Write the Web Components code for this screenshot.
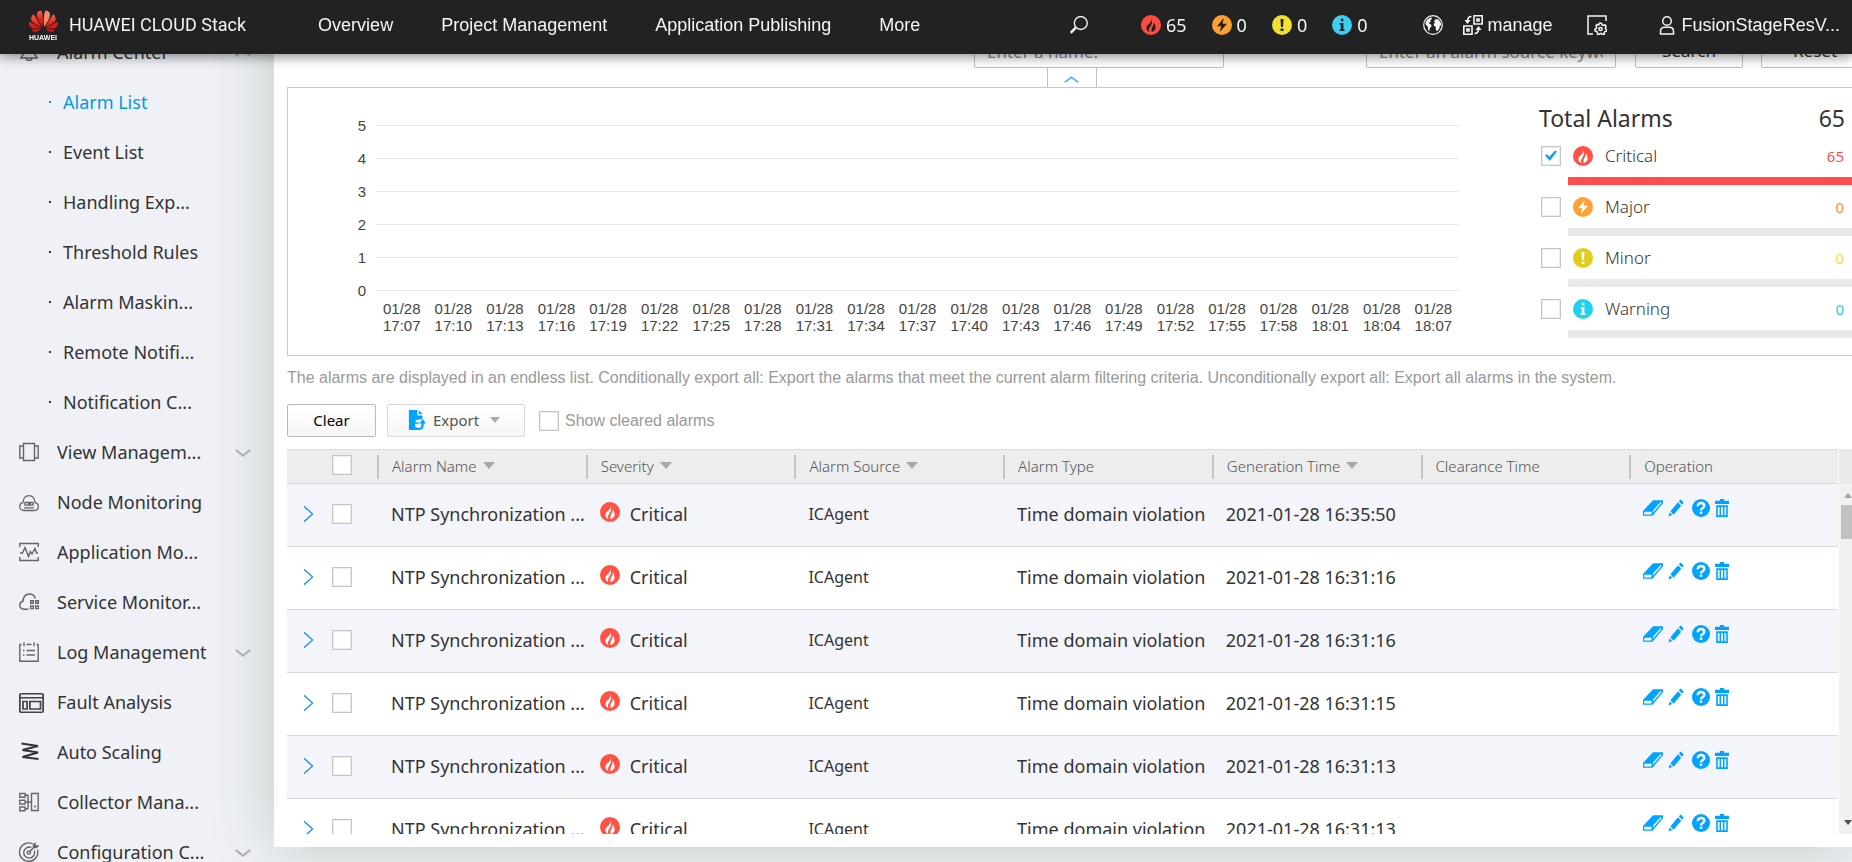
<!DOCTYPE html>
<html lang="en">
<head>
<meta charset="utf-8">
<title>HUAWEI CLOUD Stack - Alarm List</title>
<style>
  html, body { margin: 0; height: 100%; }
  body {
    font-family: "Noto Sans", "Open Sans", sans-serif;
    font-size: 18px;
    color: #333;
    background: #eff1f6;
    overflow: hidden;
  }
</style>
</head>
<body>
<alarm-app></alarm-app>

<script>
const GLYPHS = {
  fire: '<circle cx="10" cy="10" r="10" fill="currentColor"/><path fill="var(--glyph,#fff)" d="M10.200 2.800c.9 2.400-.2 4-1.500 5.500C7.200 9.800 5.200 11 5.400 13.300c.2 1.900 1.600 3.200 3.200 3.700-1.200-2-.5-3.700.5-5.100.9-1.300 1.900-2.700 1.900-4.700 0-1.700-.2-3.100-.8-4.400z"/><path fill="var(--glyph,#fff)" d="M12.600 6.800c.4 1.900-.1 3.400-1 4.700-1 1.400-1.400 3-1 5.400 2.200-.4 3.800-1.900 4-3.900.2-2.200-1-4.300-2-6.200z"/>',
  bolt: '<circle cx="10" cy="10" r="10" fill="currentColor"/><path fill="var(--glyph,#fff)" d="M11.800 3 5 11.200h4.200L7.800 17 15 8.800h-4.400z"/>',
  bang: '<circle cx="10" cy="10" r="10" fill="currentColor"/><path fill="var(--glyph,#fff)" d="M8.500 4h3l-.5 8H9zM8.600 13.500h2.800V16H8.600z"/>',
  info: '<circle cx="10" cy="10" r="10" fill="currentColor"/><path fill="var(--glyph,#fff)" d="M8.800 3.800h2.600v2.400H8.800zM7.600 8h3.800v6.600h1.200V16H7.600v-1.400h1.200V9.400H7.600z"/>',
  search: '<g fill="none" stroke="currentColor"><circle cx="12" cy="7.800" r="7.200" stroke-width="1.500"/><path d="M6.500 13 .8 18.700" stroke-width="2.800"/></g>',
  globe: '<circle cx="10" cy="10" r="9.300" fill="none" stroke="currentColor" stroke-width="1.200"/><path fill="currentColor" d="M3 6.500C4.200 4 6.200 2.800 8.500 2.500l.5 1.300-1.700 1.500.4 1.400-2.200 1.300 2.500 1.500.6 1.700-1.700 1.700-.6 3.300-1.200-1.400-.3-3.300L3.500 10.500 2.400 8.700zM11 6.500l1.700-2.500 3 .5 2.200 3.500.3 3-1.300-.8-.4 3-2.300 3-1.300-1-.2-3.500-1.700-.7-.3-2.300 1.500-1z"/>',
  manage: '<g fill="none" stroke="currentColor" stroke-width="1.600"><path d="M11 .8h8.200V9H11zM.8 11H9v8.200H.8z"/><path d="M14 4h2v2h-2zM4 14h2v2H4zM8.500 1.500C6 1.500 4.500 2.800 4.500 6M11.500 18.500c2.500 0 4-1.300 4-4.500"/></g><path fill="currentColor" d="M1.500 5h6l-3 4zM12.500 15h6l-3-4z"/>',
  config: '<g fill="none" stroke="currentColor" stroke-width="1.500"><path d="M19 6V1H1v18h5"/><circle cx="13.500" cy="14" r="1.600"/><path d="m12.500 8.300 2 0 .5 1.600 1.300.6 1.500-.8 1.300 1.500-.8 1.400.3 1.200 1.100.7-.3 1.800-1.600.3-.7 1.100.2 1.600-1.700.5-1.100-1.300h-1.300L12 19.800l-1.700-.7.2-1.600-.8-1.100-1.600-.4-.2-1.800 1.400-.8.400-1.200-.7-1.500 1.300-1.300 1.400.7z"/></g>',
  user: '<g fill="none" stroke="currentColor" stroke-width="1.500"><circle cx="10" cy="6" r="4.300"/><path d="M3.500 19v-2.500c0-2.800 1.500-4.300 4-4.300h5c2.500 0 4 1.500 4 4.300V19z"/></g>',
  bell: '<path fill="none" stroke="currentColor" stroke-width="1.400" d="M10 1.500c-4 0-5.500 3-5.500 6v4.500L1.800 16h16.400l-2.700-4V7.500c0-3-1.500-6-5.500-6zM7 16.500c.5 2.500 5.500 2.500 6 0"/>',
  view: '<path fill="none" stroke="currentColor" stroke-width="1.400" d="M4.500 1.500h11v17h-11zM4.500 4H.8v12h3.700M15.500 4h3.700v12h-3.700"/>',
  node: '<g fill="none" stroke="currentColor" stroke-width="1.300"><path d="M5 18.500c-2.500 0-4.300-1.700-4.300-4 0-2 1.300-3.400 3.300-3.800C4.300 6.500 6.500 3.700 10 3.700s5.700 2.800 6 7c2 .4 3.300 1.800 3.300 3.800 0 2.300-1.800 4-4.300 4z"/><path d="M6 10.500h8v2.700H6zM5 15.800h10M9 11.900h3"/></g>',
  wave: '<path fill="none" stroke="currentColor" stroke-width="1.400" d="M.8 5V1.500h18.400V5M.8 15v3.500h18.400V15M1 11h2.500L6 5.500l3.500 9 1.800-5 1.700 2.500L16 6.500l1.500 4.500H19"/>',
  service: '<g fill="none" stroke="currentColor" stroke-width="1.400"><path d="M9.500 17.300H5C2.500 17 .8 15.500.8 13c0-2 1.200-3.400 3.200-3.800C4.300 4.500 7 2 10.500 2c3 0 5 1.600 6 4.500"/><path d="M11.700 8.700h2.600v2.600h-2.600zM16.700 8.700h2.600v2.600h-2.600zM11.700 14h2.600v2.600h-2.600zM16.700 14h2.600v2.600h-2.600z"/></g>',
  log: '<path fill="none" stroke="currentColor" stroke-width="1.400" d="M2.500 2.500H.8v16.700h18.400V2.500h-1.700M7.500 2.500h5M5 .3v4M15 .3v4M4 8.500h1.500M7.500 8.500H16M4 13h1.500M7.500 13H16"/>',
  fault: '<g fill="none" stroke="currentColor" stroke-width="1.400"><rect x=".7" y="1.700" width="18.600" height="17.600" rx="1"/><path d="M.8 5.500h18.400M3.200 9h3.300v7.200H3.200zM8.700 9h8.500v7.200H8.700z"/></g>',
  scale: '<path fill="none" stroke="#333" stroke-width="2" d="M2.500 1.500 19 4 3.500 8 19 10.500 3.500 15l16 2"/>',
  collect: '<path fill="none" stroke="currentColor" stroke-width="1.400" d="M.8 1.500H6v3.700H.8zM.8 8.200H6V12H.8zM.8 15H6v3.700H.8zM6 3.300h3v13.500H6M6 10h7M12.500 1.500h6.700v17h-6.700zM15 14.500h2"/>',
  target: '<g fill="none" stroke="currentColor" stroke-width="1.400"><path d="M14 2A9.200 9.200 0 1 0 18.500 7.500"/><path d="M12.300 5.500a5.500 5.500 0 1 0 3 3"/><circle cx="9.800" cy="10.500" r="1.600"/><path d="m10.500 9.700 5.500-5.500V1.500L14.500 3v2.500H17l2-1.500h-2.500"/></g>',
  down: '<path fill="none" stroke="currentColor" stroke-width="2.800" d="m1 6 9 9 9-9"/>',
  up: '<path fill="none" stroke="currentColor" stroke-width="2.800" d="m1 15 9-9 9 9"/>',
  right: '<path fill="none" stroke="currentColor" stroke-width="1.700" d="m3 1.500 12 8.500-12 8.500"/>',
  export: '<path fill="currentColor" d="M1 0h9.500v5.500H16V9l-3 .5-4.500.5v2.500l3.500-.3v1.600H8V17l4 1v2H1z"/><path fill="currentColor" d="M12 0v4.200h4zM11 20v-2c3.300 0 4-1 4-4.500h-2.500l4-4.500 3.500 4.500h-2.500c0 5-1.700 6.500-6.500 6.500z"/>',
  eraser: '<path fill="currentColor" d="M10 1.500h10v3.300L9.500 18.500H0v-5.300zM1.300 14.200v3h7l.5-3zM17.700 3.300 10 12.700v2.500l8.500-10.700z" fill-rule="evenodd"/>',
  pencil: '<path fill="currentColor" d="M16 .5 19.500 4l-2 2.500-4-4zM12.500 3.500l4 4L7 17.500l-4-3.800zM2.300 14.800l3 3-4.800 1.700z"/>',
  help: '<circle cx="10" cy="10" r="10" fill="currentColor"/><path fill="none" stroke="#fff" stroke-width="2.600" d="M6.300 8c0-2.400 1.600-3.600 3.700-3.600s3.700 1.200 3.700 3.300c0 2.300-3.700 2.400-3.700 5"/><path fill="#fff" d="M8.600 14h2.800v2.500H8.600z"/>',
  trash: '<path fill="currentColor" fill-rule="evenodd" d="M7 0h6v2h7v3.500H0V2h7zM1.700 7h16.600v13H1.700zM4 9v9h2.500V9zM8.700 9v9h2.600V9zM13.500 9v9H16V9z"/>'
};

function define(name, html, ready) {
  const template = document.createElement('template');
  template.innerHTML = html;
  customElements.define(name, class extends HTMLElement {
    connectedCallback() {
      if (this.shadowRoot) return;
      this.attachShadow({ mode: 'open' }).append(template.content.cloneNode(true));
      if (ready) ready(this, this.shadowRoot);
    }
  });
}

/* Glyph from the icon set, sized by --w and --h */
define('ui-icon', `
  <style>
    :host { display: inline-flex; flex: none; width: var(--w, 20px); height: var(--h, 20px); }
    svg { width: 100%; height: 100%; display: block; }
  </style>
  <svg viewBox="0 0 20 20" preserveAspectRatio="none" aria-hidden="true"></svg>`,
  (host, root) => { root.querySelector('svg').innerHTML = GLYPHS[host.getAttribute('name')]; });

define('ui-check', `
  <style>
    :host { display: inline-flex; }
    label { display: flex; align-items: center; gap: var(--gap, 6px); }
    input {
      appearance: none; box-sizing: border-box; flex: none; display: grid; place-items: center;
      width: 20px; height: 20px; margin: 0; background: #fff;
      border: 1px solid #c6c6c6; box-shadow: inset 0 0 0 1px #ededed;
    }
    input:checked::before {
      content: ""; width: 12px; height: 11px; background: #1a9fe0;
      clip-path: polygon(0 50%, 18% 38%, 36% 62%, 84% 4%, 100% 14%, 40% 100%);
    }
  </style>
  <label><input type="checkbox"><slot></slot></label>`,
  (host, root) => {
    const input = root.querySelector('input');
    input.checked = host.hasAttribute('checked');
    if (host.hasAttribute('name')) input.setAttribute('aria-label', host.getAttribute('name'));
  });

define('brand-logo', `
  <style>
    :host { display: flex; align-items: center; }
    a { display: flex; align-items: center; gap: 10px; color: #f2f2f2; text-decoration: none; font: 18px/24px Roboto, sans-serif; }
    svg { width: 31px; height: 31px; }
  </style>
  <a href="#home">
    <svg viewBox="0 0 31 31" aria-hidden="true">
      <defs><linearGradient id="g" x1="0" y1="0" x2="0" y2="1"><stop offset="0" stop-color="#f0604c"/><stop offset=".5" stop-color="#e0261c"/><stop offset="1" stop-color="#c9100f"/></linearGradient></defs>
      <g transform="translate(1 -3) scale(1.200)" fill="url(#g)">
        <path d="M3.670 6.140S1.820 7.910 1.720 9.780v.35c.08 1.510 1.220 2.400 1.220 2.400 1.830 1.790 6.260 4.040 7.300 4.550 0 0 .06.03.1-.01l.02-.04v-.04C7.520 10.800 3.670 6.140 3.670 6.140zM9.650 18.600c-.02-.08-.1-.08-.1-.08l-7.380.26c.8 1.430 2.150 2.530 3.560 2.200.96-.25 3.160-1.780 3.880-2.300.06-.05.04-.09.04-.09zm.08-.78C6.490 15.630.21 12.280.21 12.280c-.15.46-.2.9-.21 1.300v.07c0 1.070.4 1.820.4 1.820.8 1.690 2.340 2.200 2.340 2.200.7.3 1.400.31 1.400.31.12.02 4.400 0 5.540 0 .05 0 .08-.05.08-.05v-.06c0-.03-.03-.05-.03-.05z"/>
        <path d="M9.060 3.190a3.420 3.420 0 0 0-2.570 3.150v.41c.03.6.16 1.050.16 1.050.66 2.900 3.860 7.650 4.550 8.650.05.05.1.03.1.03a.1.1 0 0 0 .06-.1c1.060-10.600-1.110-13.420-1.110-13.420-.32.02-1.190.23-1.190.23z"/>
        <path fill="#f08a6a" d="M17.360 5.460s-.49-1.800-2.440-2.280c0 0-.57-.14-1.170-.22 0 0-2.180 2.810-1.120 13.430.01.07.06.08.06.08.07.03.1-.03.1-.03.72-1.030 3.900-5.760 4.550-8.640 0 0 .36-1.400.02-2.340z"/>
        <path d="M14.440 18.530s-.07 0-.09.05c0 0-.01.07.03.1.7.51 2.850 2 3.880 2.300 0 0 .16.05.43.06h.14c.69-.02 1.900-.37 3-2.260l-7.400-.25zm7.830-8.410c.14-2.060-1.940-3.970-1.940-3.980 0 0-3.850 4.660-6.670 10.800 0 0-.03.08.02.13l.04.01h.06c1.060-.53 5.460-2.770 7.280-4.540 0 0 1.150-.93 1.210-2.420zm1.520 2.140s-6.280 3.370-9.520 5.550c0 0-.05.04-.03.11 0 0 .03.06.07.06 1.160 0 5.560 0 5.670-.02 0 0 .57-.02 1.270-.29 0 0 1.560-.5 2.370-2.270 0 0 .73-1.450.17-3.140z"/>
      </g>
      <text x="1" y="30" font-family="Liberation Sans, sans-serif" font-weight="700" font-size="7" fill="#fff">HUAWEI</text>
    </svg>
    HUAWEI CLOUD Stack
  </a>`);

define('top-bar', `
  <style>
    :host {
      position: fixed; inset: 0 0 auto 0; z-index: 10; height: 54px; box-sizing: border-box;
      display: flex; align-items: center; padding: 0 12px 4px 28px;
      background: #222; color: #f5f5f5; --glyph: #222;
      box-shadow: 0 2px 12px rgba(0, 0, 0, .5);
      font: 18px/24px "Liberation Sans", Arial, sans-serif;
    }
    a { color: inherit; text-decoration: none; white-space: nowrap; }
    nav { display: flex; gap: 48px; margin-left: 72px; }
    .tools { display: flex; align-items: center; margin-left: auto; }
    button { display: flex; padding: 0; border: 0; background: none; color: inherit; }
    .counts { display: flex; gap: 25px; margin: 0 55px 0 53px; }
    .counts a { display: flex; align-items: center; gap: 5px; font-family: "Noto Sans", sans-serif; }
    .group { display: flex; align-items: center; gap: 5px; }
    .manage { margin: 0 34px 0 20px; }
    .user { margin-left: 50px; }
  </style>
  <brand-logo></brand-logo>
  <nav><a href="#overview">Overview</a><a href="#projects">Project Management</a><a href="#publish">Application Publishing</a><a href="#more">More</a></nav>
  <div class="tools">
    <button aria-label="Search" style="--w:18px;--h:18px"><ui-icon name="search"></ui-icon></button>
    <div class="counts">
      <a href="#critical"><ui-icon name="fire" style="color:#ff4c43"></ui-icon>65</a>
      <a href="#major"><ui-icon name="bolt" style="color:#ffa033"></ui-icon>0</a>
      <a href="#minor"><ui-icon name="bang" style="color:#f0e130"></ui-icon>0</a>
      <a href="#warning"><ui-icon name="info" style="color:#3fcdf0"></ui-icon>0</a>
    </div>
    <button aria-label="Language"><ui-icon name="globe"></ui-icon></button>
    <a class="group manage" href="#manage"><ui-icon name="manage"></ui-icon>manage</a>
    <button aria-label="Settings"><ui-icon name="config"></ui-icon></button>
    <a class="group user" href="#user"><ui-icon name="user"></ui-icon>FusionStageResV...</a>
  </div>`);

define('nav-item', `
  <style>
    :host { display: block; }
    a { display: flex; align-items: center; height: 50px; padding: 0 23px 0 19px; gap: 18px; color: #333; text-decoration: none; white-space: nowrap; }
    span { flex: 1; }
    ui-icon { color: #666; }
    [name=fault] { --w: 25px; --h: 21px; margin-right: -5px; color: #444; }
    .arrow { color: #aaa; --w: 16px; --h: 13px; }
    :host([sub]) a { padding-left: 49px; gap: 12px; }
    i { width: 2px; height: 2px; background: currentColor; }
    :host([active]) a { color: #0099e6; }
  </style>
  <a href="#"><span><slot></slot></span></a>`,
  (host, root) => {
    const link = root.querySelector('a');
    const lead = document.createElement(host.hasAttribute('sub') ? 'i' : 'ui-icon');
    if (host.hasAttribute('icon')) lead.setAttribute('name', host.getAttribute('icon'));
    link.prepend(lead);
    if (host.hasAttribute('arrow')) {
      const arrow = document.createElement('ui-icon');
      arrow.className = 'arrow';
      arrow.setAttribute('name', host.getAttribute('arrow'));
      link.append(arrow);
    }
  });

define('side-nav', `
  <style>
    :host { display: block; flex: none; width: 274px; padding-top: 27px; box-sizing: border-box; }
    nav { display: block; }
  </style>
  <nav aria-label="Monitoring">
    <nav-item icon="bell" arrow="up">Alarm Center</nav-item>
    <nav-item sub active>Alarm List</nav-item>
    <nav-item sub>Event List</nav-item>
    <nav-item sub>Handling Exp...</nav-item>
    <nav-item sub>Threshold Rules</nav-item>
    <nav-item sub>Alarm Maskin...</nav-item>
    <nav-item sub>Remote Notifi...</nav-item>
    <nav-item sub>Notification C...</nav-item>
    <nav-item icon="view" arrow="down">View Managem...</nav-item>
    <nav-item icon="node">Node Monitoring</nav-item>
    <nav-item icon="wave">Application Mo...</nav-item>
    <nav-item icon="service">Service Monitor...</nav-item>
    <nav-item icon="log" arrow="down">Log Management</nav-item>
    <nav-item icon="fault">Fault Analysis</nav-item>
    <nav-item icon="scale">Auto Scaling</nav-item>
    <nav-item icon="collect">Collector Mana...</nav-item>
    <nav-item icon="target" arrow="down">Configuration C...</nav-item>
  </nav>`);

define('filter-bar', `
  <style>
    :host { display: block; }
    form { display: flex; justify-content: flex-end; margin-right: -13px; }
    input, button {
      box-sizing: border-box; height: 34px; border: 1px solid #c0c0c0; border-radius: 2px;
      background: #fff; font: 17px/20px "Noto Sans", sans-serif; color: #333;
    }
    input { width: 250px; padding: 0 12px; }
    input::placeholder { color: #888; }
    input + input { margin: 0 19px 0 142px; }
    form button { width: 108px; }
    form button + button { margin-left: 18px; }
    .fold { display: flex; align-items: center; justify-content: center; width: 50px; height: 19px; margin: 0 auto; padding: 3px 0 0; border-width: 0 1px; border-radius: 0; color: #5aaef5; --w: 15px; --h: 11px; }
  </style>
  <form onsubmit="return false">
    <input aria-label="Name" placeholder="Enter a name.">
    <input aria-label="Alarm source" placeholder="Enter an alarm source keyword.">
    <button>Search</button><button type="reset">Reset</button>
  </form>
  <button class="fold" aria-label="Collapse filters"><ui-icon name="up"></ui-icon></button>`);

define('trend-chart', `
  <style>
    :host { display: block; font: 15px/17px "Liberation Sans", Arial, sans-serif; color: #444; }
    .row { display: flex; align-items: center; gap: 10px; height: 33px; }
    .row span { width: 20px; text-align: right; }
    .row i { flex: 1; height: 1px; background: #e8e8e8; }
    .times { display: flex; margin: -7px 0 0 30px; }
    .times span { flex: 1; text-align: center; }
  </style>
  <div class="rows"></div><div class="times"></div>`,
  (host, root) => {
    root.querySelector('.rows').innerHTML = [5, 4, 3, 2, 1, 0].map(n => `<div class="row"><span>${n}</span><i></i></div>`).join('');
    let out = '';
    for (let m = 7; m <= 67; m += 3) {
      const time = (17 + Math.floor(m / 60)) + ':' + String(m % 60).padStart(2, '0');
      out += `<span>01/28<br>${time}</span>`;
    }
    root.querySelector('.times').innerHTML = out;
  });

define('severity-row', `
  <style>
    :host { display: block; font-weight: 300; font-size: 17px; line-height: 22px; }
    .line { display: flex; align-items: center; justify-content: space-between; height: 43px; padding: 0 11px 0 2px; }
    ui-check { --gap: 12px; }
    ui-icon { color: var(--icon); }
    .name { display: flex; align-items: center; gap: 12px; }
    .value { font-size: 15px; color: var(--value); font-weight: 400; }
    .bar { height: 8px; margin-left: 29px; background: var(--bar, #e9e9e9); }
  </style>
  <div class="line"><span class="value"></span></div>
  <div class="bar"></div>`,
  (host, root) => {
    root.querySelector('.value').textContent = host.getAttribute('value');
    const check = document.createElement('ui-check');
    check.toggleAttribute('checked', host.hasAttribute('checked'));
    check.innerHTML = `<span class="name"><ui-icon name="${host.getAttribute('icon')}"></ui-icon><slot></slot></span>`;
    root.querySelector('.line').prepend(check);
  });

define('alarm-summary', `
  <style>
    :host { display: flex; align-items: flex-start; box-sizing: border-box; height: 269px; border: 1px solid #c8c8c8; }
    trend-chart { flex: 1; margin: 21px 80px 0 58px; }
    .totals { width: 316px; padding-top: 14px; }
    h2 { display: flex; justify-content: space-between; margin: 0; padding: 1px 10px 0 0; font-size: 23px; line-height: 31px; font-weight: 400; }
  </style>
  <trend-chart></trend-chart>
  <section class="totals">
    <h2><span>Total Alarms</span><span>65</span></h2>
    <severity-row icon="fire" value="65" checked style="--icon:#ff5244;--value:#ff4d4d;--bar:#ff4d4d">Critical</severity-row>
    <severity-row icon="bolt" value="0" style="--icon:#ffa033;--value:#ff8a3d">Major</severity-row>
    <severity-row icon="bang" value="0" style="--icon:#e1ce1c;--value:#ffd83d">Minor</severity-row>
    <severity-row icon="info" value="0" style="--icon:#1fd0f2;--value:#22ccee">Warning</severity-row>
  </section>`);

define('list-toolbar', `
  <style>
    :host { display: block; font: 16px/24px "Liberation Sans", Arial, sans-serif; color: #999; }
    p { margin: 10px 0 14px; white-space: nowrap; }
    .row { display: flex; align-items: center; }
    button {
      display: flex; align-items: center; justify-content: center; box-sizing: border-box; height: 33px; padding: 0 0 1px;
      border: 1px solid #bbb; border-radius: 2px; background: linear-gradient(#fff, #f6f6f6);
      font: 15px/20px "Noto Sans", sans-serif; color: #000;
    }
    .clear { width: 89px; margin-right: 11px; }
    .export { width: 138px; margin-right: 14px; border-color: #d8d8d8; color: #555; gap: 7px; --w: 18px; --h: 20px; }
    .export ui-icon { color: #00a4ff; }
    .export i { margin: 0 4px; border: 5px solid transparent; border-top: 6px solid #aaa; border-bottom: 0; }
  </style>
  <p>The alarms are displayed in an endless list. Conditionally export all: Export the alarms that meet the current alarm filtering criteria. Unconditionally export all: Export all alarms in the system.</p>
  <div class="row">
    <button class="clear">Clear</button>
    <button class="export"><ui-icon name="export"></ui-icon>Export<i></i></button>
    <ui-check>Show cleared alarms</ui-check>
  </div>`);

define('scroll-track', `
  <style>
    :host { display: flex; flex-direction: column; align-items: center; box-sizing: border-box; flex: none; width: 17px; border-top: 35px solid #e9e9e9; background: #f1f1f1; }
    i { border: 4px solid transparent; }
    .up { border-bottom-color: #a3a3a3; border-top: 0; margin-top: 9px; border-bottom-width: 5px; }
    .thumb { width: 13px; height: 34px; margin-top: 7px; background: #c1c1c1; }
    .down { border-top-color: #505050; border-bottom: 0; margin: auto 0 9px; border-top-width: 5px; }
  </style>
  <i class="up"></i><div class="thumb"></div><i class="down"></i>`);

define('alarm-table', `
  <style>
    :host { display: flex; min-height: 0; overflow: hidden; }
    .view { flex: 1; overflow: hidden; margin-right: 1px; }
    table { width: 100%; table-layout: fixed; border-collapse: separate; border-spacing: 0; }
    th, td { box-sizing: border-box; padding: 0 0 0 14px; text-align: left; white-space: nowrap; overflow: hidden; border-bottom: 1px solid #d9dcdd; }
    th { height: 35px; padding-left: 0; background: #ededed; border-top: 1px solid #d9dcdd; font-size: 15px; line-height: 20px; font-weight: 300; color: #555; }
    th div { display: flex; align-items: center; box-sizing: border-box; height: 24px; padding: 0 0 2px 13px; border-left: 2px solid #c4c4c4; }
    th i { margin-left: 6px; border: 6px solid transparent; border-top: 7px solid #a3aaa8; border-bottom: 0; }
    td { height: 63px; line-height: 24px; padding-bottom: 2px; }
    tr:nth-child(odd) td { background: #f4f5fa; }
    tr > :nth-child(1) { padding-left: 15px; }
    tr > :nth-child(2) { padding-left: 0; }
    ui-check { display: flex; padding-bottom: 4px; }
    td ui-check { padding-bottom: 0; }
    button { display: flex; padding: 0; border: 0; background: none; color: #1a93dd; }
    .expand { --w: 14px; --h: 18px; }
    .severity { display: flex; align-items: center; gap: 10px; }
    .severity ui-icon { color: #ff5244; padding-bottom: 4px; }
    .source { font-size: 16px; }
    .actions { display: flex; align-items: center; height: 18px; padding-bottom: 12px; --h: 18px; }
    .actions button { color: #00a4ff; }
  </style>
  <div class="view">
    <table>
      <colgroup><col style="width:45px"><col style="width:45px"><col span="7"></colgroup>
      <thead><tr>
        <th aria-label="Expand"></th><th><ui-check name="Select all"></ui-check></th>
        <th><div>Alarm Name<i></i></div></th><th><div>Severity<i></i></div></th><th><div>Alarm Source<i></i></div></th>
        <th><div>Alarm Type</div></th><th><div>Generation Time<i></i></div></th><th><div>Clearance Time</div></th><th><div>Operation</div></th>
      </tr></thead>
      <tbody></tbody>
    </table>
  </div>
  <scroll-track></scroll-track>`,
  (host, root) => {
    const times = ['16:35:50', '16:31:16', '16:31:16', '16:31:15', '16:31:13', '16:31:13'];
    root.querySelector('tbody').innerHTML = times.map(time => `<tr>
      <td><button class="expand" aria-label="Expand row"><ui-icon name="right"></ui-icon></button></td>
      <td><ui-check name="Select row"></ui-check></td>
      <td>NTP Synchronization ...</td>
      <td><div class="severity"><ui-icon name="fire"></ui-icon>Critical</div></td>
      <td class="source">ICAgent</td>
      <td>Time domain violation</td>
      <td>2021-01-28 ${time}</td>
      <td></td>
      <td><div class="actions">
        <button aria-label="Clear alarm" style="--w:20px;margin-right:5px"><ui-icon name="eraser"></ui-icon></button>
        <button aria-label="Edit" style="--w:16px;margin-right:8px"><ui-icon name="pencil"></ui-icon></button>
        <button aria-label="Help" style="--w:18px;margin-right:5px"><ui-icon name="help"></ui-icon></button>
        <button aria-label="Delete" style="--w:14px"><ui-icon name="trash"></ui-icon></button>
      </div></td>
    </tr>`).join('');
  });

define('alarm-app', `
  <style>
    :host { display: flex; height: 100vh; overflow: hidden; }
    main {
      position: relative; flex: 1; min-width: 0; box-sizing: border-box; height: calc(100vh - 15px);
      display: flex; flex-direction: column; padding: 34px 0 13px 13px;
      background: #fff; box-shadow: 0 0 60px #bfc9c4;
    }
    main > * { flex: none; margin-right: -4px; }
    main > alarm-table { flex: 1 1 0; margin-top: 12px; }
  </style>
  <top-bar></top-bar>
  <side-nav></side-nav>
  <main>
    <filter-bar></filter-bar>
    <alarm-summary></alarm-summary>
    <list-toolbar></list-toolbar>
    <alarm-table></alarm-table>
  </main>`);
</script>
</body>
</html>
